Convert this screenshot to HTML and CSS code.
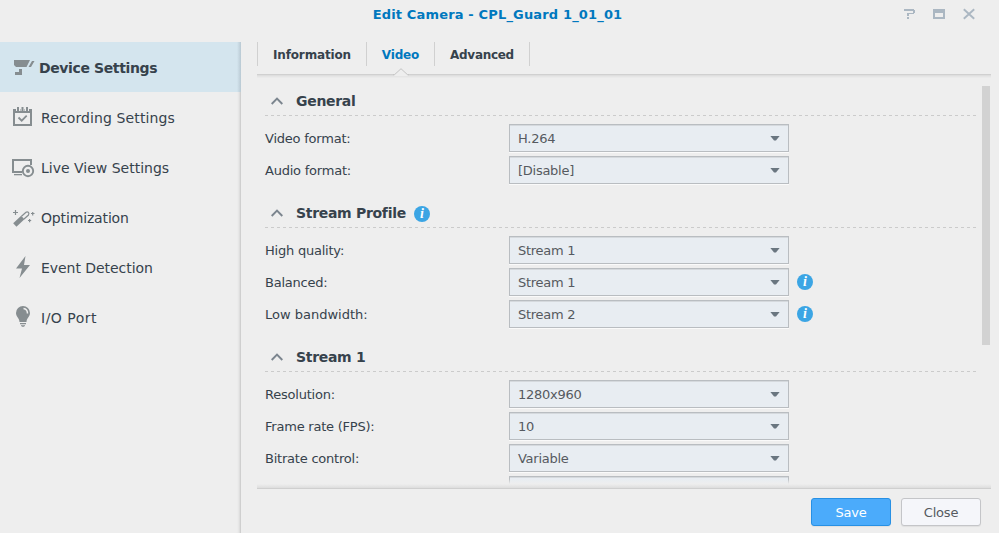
FILE: index.html
```html
<!DOCTYPE html>
<html lang="en">
<head>
<meta charset="utf-8">
<title>Edit Camera</title>
<link rel="stylesheet" href="styles.css">
</head>
<body>
<div class="window">
  <header class="titlebar">
    <h1 class="title">Edit Camera - CPL_Guard 1_01_01</h1>
    <div class="tools">
      <svg width="12" height="12" viewBox="0 0 12 12" shape-rendering="crispEdges"><path fill="#abb7c2" d="M1 1h10v1h1v3h-1v1H6v1H4V5h6V3H1zM4 7h2v1H4zM4 9h2v2H4z"/></svg>
      <svg width="12" height="12" viewBox="0 0 12 12"><path fill="#abb7c2" fill-rule="evenodd" d="M0 1h12v10H0zM2 5v4h8V5z"/></svg>
      <svg width="12" height="12" viewBox="0 0 12 12"><path fill="none" stroke="#abb7c2" stroke-width="1.9" d="M.8 1.2 11.2 10.8M11.2 1.2 .8 10.8"/></svg>
    </div>
  </header>
  <div class="body">
    <nav class="sidebar">
      <a class="item active"><svg class="icon" width="24" height="24" viewBox="0 0 24 24"><path fill="#868d90" d="M3 4h16l-3.500 7H5L3 9zM21 5H23.500l-3.500 6H17.500zM8 13h3v6H4v-3h4z"/></svg><span>Device Settings</span></a>
      <a class="item recording"><svg class="icon" width="24" height="24" viewBox="0 0 24 24"><path fill="#868d90" fill-rule="evenodd" d="M2 3h19v17H2zM4 7v11h15V7z"/><path fill="#eee" d="M5 2h4v3H5zM9.500 2h4v3h-4zM14 2h4v3h-4z"/><path fill="#868d90" d="M6 1h2v5H6zM10.500 1h2v5h-2zM15 1h2v5h-2z"/><path fill="none" stroke="#868d90" stroke-width="1.800" d="m7.500 11.500 3.200 3.200 5-5"/></svg><span>Recording Settings</span></a>
      <a class="item"><svg class="icon" width="24" height="24" viewBox="0 0 24 24"><path fill="none" stroke="#868d90" stroke-width="2" d="M11 16H2V4h18v5"/><path fill="#868d90" d="M3 18h8v1.300H3z"/><circle cx="17" cy="15" r="5.200" fill="none" stroke="#868d90" stroke-width="1.900"/><circle cx="17" cy="15" r="2" fill="#868d90"/></svg><span>Live View Settings</span></a>
      <a class="item optimization"><svg class="icon" width="24" height="24" viewBox="0 0 24 24"><path stroke="#868d90" stroke-width="4.800" d="m3.800 19 8-7.500"/><path fill="none" stroke="#868d90" stroke-width="1.200" d="m10.500 10.200 4.500-4q1.200-.9 2.300.1T17.500 9L13 13M2 6.500h5M4.500 4v5M20 7.500h3.500M21.700 6v3.500M17 14.500h3.200M18.600 13v3.200"/></svg><span>Optimization</span></a>
      <a class="item event"><svg class="icon" width="24" height="24" viewBox="0 0 24 24"><path fill="#868d90" d="M14.500 0 5 12.500h6L8.500 22 19 9h-6z"/></svg><span>Event Detection</span></a>
      <a class="item port"><svg class="icon" width="24" height="24" viewBox="-1 0 24 24"><path fill="#868d90" d="M11 0a7 7 0 0 1 7 7c0 4-3.500 5-3.500 9h-7C7.500 12 4 11 4 7a7 7 0 0 1 7-7M8 17h6v1.200H8zM9 19.200h4v.8l-2 1-2-1z"/><path fill="none" stroke="#ededed" stroke-width="1.500" d="M11.500 2.500q4 .5 4 5"/></svg><span>I/O Port</span></a>
    </nav>
    <main class="main">
      <div class="tabs">
        <a class="tab info-tab">Information</a>
        <a class="tab video-tab current">Video<svg class="pointer" width="16" height="8" viewBox="0 0 16 8"><path fill="#eee" d="M1 7 8 0l7 7v1H1z"/><path fill="none" stroke="#c4c4c4" d="M0 6.700h1.500L8 .7l6.500 6H16"/></svg></a>
        <a class="tab adv-tab">Advanced</a>
      </div>
      <div class="viewport">
        <div class="form">
          <section>
            <h2><svg class="chev" width="12" height="8" viewBox="0 0 12 8"><path d="m.7 7 5.300-5.500L11.300 7"/></svg><span>General</span></h2>
            <div class="row"><label>Video format:</label><div class="select">H.264</div></div>
            <div class="row"><label>Audio format:</label><div class="select">[Disable]</div></div>
          </section>
          <section>
            <h2><svg class="chev" width="12" height="8" viewBox="0 0 12 8"><path d="m.7 7 5.300-5.500L11.300 7"/></svg><span>Stream Profile</span><i class="tip">i</i></h2>
            <div class="row"><label>High quality:</label><div class="select">Stream 1</div></div>
            <div class="row"><label>Balanced:</label><div class="select">Stream 1</div><i class="tip">i</i></div>
            <div class="row"><label class="wide">Low bandwidth:</label><div class="select">Stream 2</div><i class="tip">i</i></div>
          </section>
          <section>
            <h2><svg class="chev" width="12" height="8" viewBox="0 0 12 8"><path d="m.7 7 5.300-5.500L11.300 7"/></svg><span>Stream 1</span></h2>
            <div class="row"><label>Resolution:</label><div class="select">1280x960</div></div>
            <div class="row"><label>Frame rate (FPS):</label><div class="select">10</div></div>
            <div class="row"><label>Bitrate control:</label><div class="select">Variable</div></div>
            <div class="row"><label></label><div class="select"></div></div>
          </section>
        </div>
        <div class="scrollbar"></div>
      </div>
      <footer class="footer">
        <button class="btn save">Save</button>
        <button class="btn close">Close</button>
      </footer>
    </main>
  </div>
</div>
</body>
</html>
```
FILE: styles.css
```css
* { box-sizing: border-box; }
body { margin: 0; background: #eee; color: #36424c; font: 13px/20px Verdana, "DejaVu Sans", sans-serif; }
.window { width: 999px; height: 533px; display: flex; flex-direction: column; overflow: hidden; }
.titlebar { height: 42px; flex: none; display: grid; grid-template-columns: 1fr auto 1fr; align-items: start; padding: 4px 24px 0; }
.title { grid-column: 2; margin: 1px 4px 0 0; font-size: 13px; line-height: 20px; letter-spacing: .16px; color: #0078be; white-space: nowrap; }
.tools { display: flex; justify-content: flex-end; gap: 18px; padding-top: 4px; }
.body { flex: 1; display: flex; min-height: 0; }
.sidebar { width: 241px; flex: none; box-shadow: inset -1px 0 #cfcfcf, inset -2px 0 #dedede, inset -4px 0 3px -2px rgba(0,0,0,.08); }
.item { height: 50px; display: flex; align-items: center; padding: 2px 0 0 12px; gap: 5px; font-size: 14px; white-space: nowrap; }
.item.active { background: linear-gradient(to right, #d4e5ee 237px, #b9c9d3); font-weight: bold; gap: 3px; letter-spacing: -.38px; }
.recording { letter-spacing: .11px; }
.optimization { letter-spacing: -.15px; }
.event { letter-spacing: -.05px; }
.port { letter-spacing: .5px; }
.icon { flex: none; margin-left: -1px; }
.item span { padding-left: 1px; }
.main { flex: 1; min-width: 0; padding: 0 8px 0 16px; display: flex; flex-direction: column; }
.tabs { height: 33px; flex: none; display: flex; border-bottom: 1px solid #d0d0d0; box-shadow: 0 1px #dedede, 0 2px #e5e5e5, 0 3px #eaeaea; }
.tab { height: 24px; border-right: 1px solid #d0d0d0; text-align: center; font-size: 12px; font-weight: bold; line-height: 27px; letter-spacing: -.15px; position: relative; white-space: nowrap; }
.info-tab { width: 110px; border-left: 1px solid #d0d0d0; }
.video-tab { width: 68px; }
.adv-tab { width: 95px; letter-spacing: -.3px; }
.current { color: #0078be; }
.pointer { position: absolute; left: 26px; top: 26px; }
.viewport { flex: 1; min-height: 0; display: flex; justify-content: space-between; padding: 11px 1px 0 8px; overflow: hidden; position: relative; }
.viewport::after { content: ""; position: absolute; left: 0; right: 0; bottom: 0; height: 9px; background: linear-gradient(rgba(238,238,238,0), #eee 5px, #ddd 9px); }
.form { width: 712px; height: 0; }
section { margin-bottom: 14px; }
h2 { height: 30px; margin: 0 0 8px; display: flex; align-items: center; font-size: 14px; letter-spacing: -.3px; padding-left: 6px; background: repeating-linear-gradient(to right, #cbcbcb 0 3px, transparent 3px 6px) bottom / 100% 1px no-repeat; }
.chev { margin-right: 13px; fill: none; stroke: #7b858e; stroke-width: 1.9; }
.row { height: 28px; margin-bottom: 4px; display: flex; align-items: center; }
label { width: 244px; flex: none; padding-top: 2px; letter-spacing: -.22px; }
label.wide { letter-spacing: 0; }
.select { width: 280px; height: 28px; border: 1px solid #b9bdc1; background: #e8edf2; box-shadow: inset 0 1px #d5d9dd, 0 1px #fafafa; color: #565a60; padding: 0 8px; line-height: 27px; letter-spacing: -.27px; display: flex; justify-content: space-between; align-items: center; }
.select::after { content: ""; width: 10px; height: 5px; background: #6a7680; clip-path: polygon(0 0, 100% 0, 60% 100%, 40% 100%); }
.tip { width: 16px; height: 16px; flex: none; margin-left: 8px; border-radius: 50%; background: #3ba5e4; color: #fff; font: italic bold 14px/16px "Liberation Serif", serif; letter-spacing: 0; text-align: center; }
h2 .tip { margin-top: 2px; }
.scrollbar { width: 8px; height: 259px; background: #d2d2d2; }
.footer { height: 45px; flex: none; border-top: 1px solid #cfcfcf; display: flex; justify-content: flex-end; gap: 10px; padding: 9px 10px 0 0; }
.btn { width: 80px; height: 28px; border: 1px solid #c4c5c8; border-radius: 3px; padding: 2px 0 0; font: inherit; letter-spacing: -.2px; box-shadow: 0 1px 1px rgba(0,0,0,.06); background: #f5f6fa; color: #565a60; }
.save { background: #4babfb; border-color: #2790e4; color: #fff; }
```
